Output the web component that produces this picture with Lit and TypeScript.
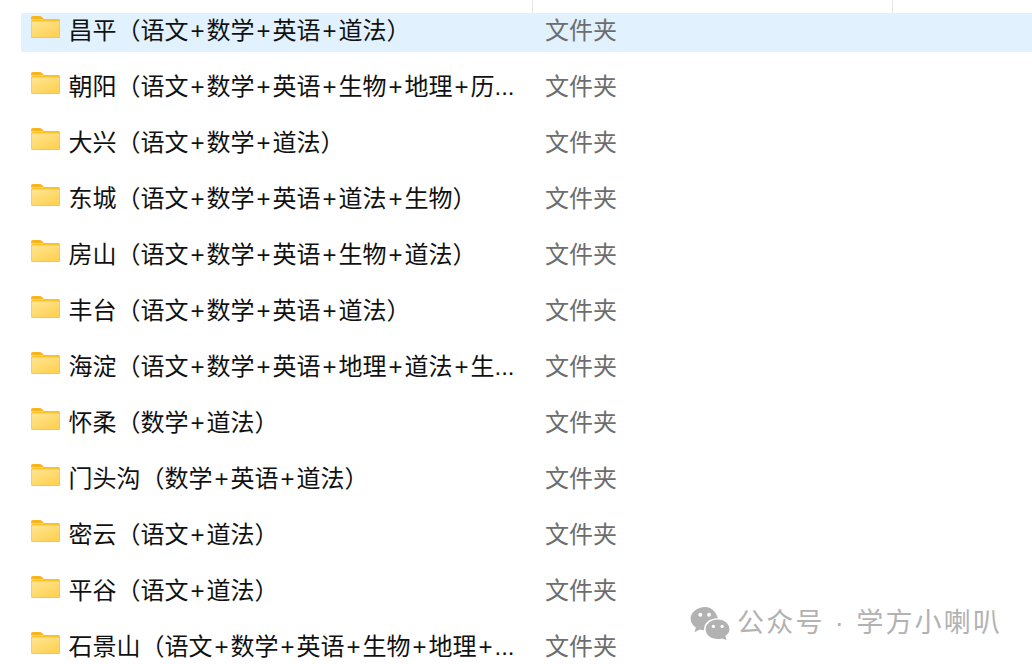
import { LitElement, html, css } from "lit";
import { customElement } from "lit/decorators.js";

const ROWS = [
  "昌平（语文+数学+英语+道法）",
  "朝阳（语文+数学+英语+生物+地理+历...",
  "大兴（语文+数学+道法）",
  "东城（语文+数学+英语+道法+生物）",
  "房山（语文+数学+英语+生物+道法）",
  "丰台（语文+数学+英语+道法）",
  "海淀（语文+数学+英语+地理+道法+生...",
  "怀柔（数学+道法）",
  "门头沟（数学+英语+道法）",
  "密云（语文+道法）",
  "平谷（语文+道法）",
  "石景山（语文+数学+英语+生物+地理+...",
];

const folder = html`<svg class="folder" viewBox="0 0 30 22" width="29" height="22" preserveAspectRatio="none">
  <defs>
    <linearGradient id="fg" x1="0" y1="0" x2="0.7" y2="1">
      <stop offset="0" stop-color="#ffe692"></stop>
      <stop offset="1" stop-color="#ffd155"></stop>
    </linearGradient>
  </defs>
  <path d="M0 2C0 .8 .8 0 2 0h7c1 0 1.600 .3 2.300 1L14 3.500H0z" fill="#fbb31c"></path>
  <path d="M0 5.500c0-1 .6-1.500 1.500-1.500L11 4l2-1h15.500c1 0 1.500 .6 1.500 1.500V20.500c0 1-.6 1.500-1.500 1.500h-27C.6 22 0 21.500 0 20.500z" fill="#fdc12e"></path>
  <path d="M.6 5.500H29.400V20c0 .9-.5 1.200-1.200 1.200H1.800c-.8 0-1.200-.3-1.200-1.200z" fill="url(#fg)"></path>
</svg>`;

@customElement("app-root")
export class AppRoot extends LitElement {
  static styles = css`
    :host {
      display: block;
      position: relative;
      width: 1032px;
      height: 664px;
      overflow: hidden;
      background: #fff;
      font-family: "Liberation Sans", "Noto Sans CJK SC", sans-serif;
      font-size: 24px;
      color: #111;
    }
    .head {
      height: 13px;
      display: grid;
      grid-template-columns: 533px 360px 1fr;
    }
    .head div {
      border-right: 1px solid #e5e5e5;
    }
    .head div:last-child {
      border-right: 0;
    }
    .list {
      display: flex;
      flex-direction: column;
      gap: 17px;
      padding-left: 21px;
    }
    .row {
      height: 39px;
      display: grid;
      grid-template-columns: 47.5px 476.5px 1fr;
      align-items: center;
      border-radius: 2px 0 0 2px;
    }
    .row.sel {
      background: #e2f1fe;
    }
    .folder {
      display: block;
      align-self: start;
      margin: 3px 0 0 10px;
    }
    .name {
      white-space: nowrap;
      overflow: hidden;
      line-height: 34px;
      padding-bottom: 4px;
    }
    .plus {
      display: inline-block;
      width: 18px;
      text-align: center;
    }
    .type {
      color: #6d6d6d;
      line-height: 34px;
      padding-bottom: 4px;
    }
    .mark {
      position: absolute;
      left: 690px;
      top: 605px;
      display: flex;
      align-items: center;
      gap: 6px;
      color: #b2b2b2;
      font-size: 27px;
      letter-spacing: 2.2px;
      word-spacing: 0.5px;
      line-height: 36px;
      white-space: nowrap;
    }
  `;

  renderName(n: string) {
    const parts = n.split("+");
    return parts.map((p, i) => html`${i ? html`<span class="plus">+</span>` : ""}${p}`);
  }

  render() {
    return html`
      <div class="head"><div></div><div></div><div></div></div>
      <div class="list">
        ${ROWS.map(
          (r, i) => html`<div class="row ${i === 0 ? "sel" : ""}">
            ${folder}
            <div class="name">${this.renderName(r)}</div>
            <div class="type">文件夹</div>
          </div>`
        )}
      </div>
      <div class="mark">
        <svg width="41" height="34" viewBox="0 0 41 35">
          <path d="M15 1C7 1 0 6.500 0 13c0 3.800 2.300 7 5.500 9.200L4 27l5.500-2.800c1.500.4 3 .6 4.500.7C13 18 19 12.500 28 12.500 26.500 6 21 1 15 1z" fill="#b2b2b2"></path>
          <path d="M28 14c-7 0-12.500 4.600-12.500 10.300S21 34 28 34c1.500 0 3-.2 4.300-.6L37 35l-1.200-4C38.500 29 40 26.800 40 24.300 40 18.600 35 14 28 14z" fill="#b2b2b2"></path>
          <circle cx="10" cy="9" r="2" fill="#fff"></circle>
          <circle cx="19" cy="9" r="2" fill="#fff"></circle>
          <circle cx="23.500" cy="21" r="1.700" fill="#fff"></circle>
          <circle cx="32.500" cy="21" r="1.700" fill="#fff"></circle>
        </svg>
        <span>公众号 · 学方小喇叭</span>
      </div>
    `;
  }
}
